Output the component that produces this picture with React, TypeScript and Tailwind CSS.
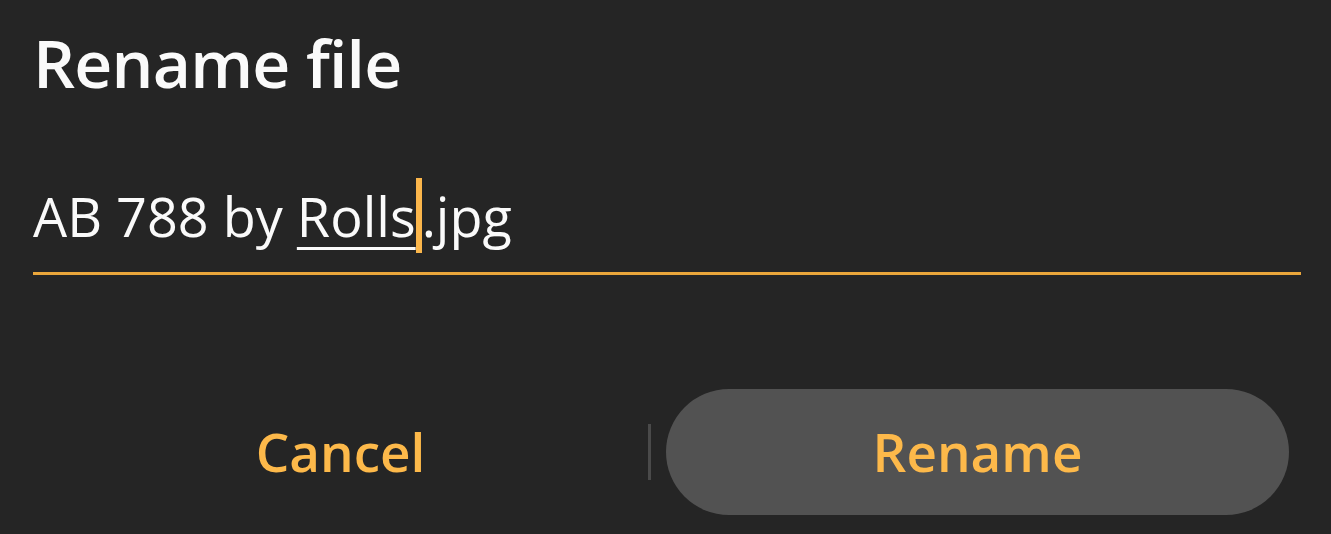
export default function App() {
    return (
        <div className="w-[1331px] h-[534px] bg-[#252525] overflow-hidden" style={{ fontFamily: '"Open Sans", "Noto Sans", sans-serif' }}>
            <div className="pl-[33px] pr-[30px] pt-[14px]">
                <h1 className="text-[66px] leading-[96px] font-semibold text-[#fafafa] tracking-[-0.8px]">Rename file</h1>

                <div className="mt-[68px] border-b-[3px] border-[#eaa63b] pb-[19px]">
                    <div className="text-[54px] leading-[70px] text-[#fafafa] flex items-center">
                        <span>AB 788 by&nbsp;</span>
                        <span className="underline decoration-[3px] underline-offset-[10px]">Rolls</span>
                        <span className="w-[6px] h-[75px] bg-[#fbb64b]" />
                        <span>.jpg</span>
                    </div>
                </div>

                <div className="mt-[114px] flex items-center">
                    <button className="w-[615px] text-center text-[53px] font-semibold text-[#fdb94a]">Cancel</button>
                    <div className="w-[3px] h-[56px] bg-[#4a4a4a]" />
                    <button className="ml-[15px] w-[623px] h-[126px] rounded-full bg-[#525252] text-[53px] font-semibold text-[#fdb94a]">Rename</button>
                </div>
            </div>
        </div>
    );
}
